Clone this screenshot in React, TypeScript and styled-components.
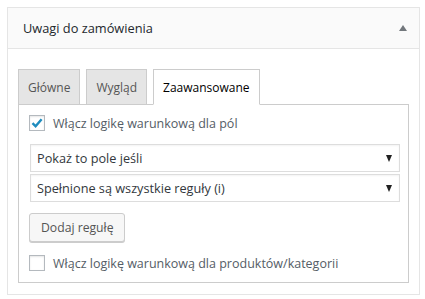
import React, { useState } from "react";
import styled, { createGlobalStyle } from "styled-components";

const GlobalStyle = createGlobalStyle`
	body {
		margin: 0;
		background: #ffffff;
		font-family: "Open Sans", "Noto Sans", sans-serif;
	}
`;

const Panel = styled.div`
	margin: 7px 5px 0 7px;
	width: 411px;
	border: 1px solid #e5e5e5;
	background: #fff;
`;

const Header = styled.div`
	display: flex;
	align-items: center;
	justify-content: space-between;
	height: 40px;
	padding: 0 12px 0 15px;
	background: #fafafa;
	border-bottom: 1px solid #e5e5e5;
`;

const Title = styled.span`
	font-size: 12.8px;
	color: #23282d;
`;

const Toggle = styled.span`
	width: 0;
	height: 0;
	border-left: 4px solid transparent;
	border-right: 4px solid transparent;
	border-bottom: 6px solid #72777c;
`;

const Body = styled.div`
	padding: 20px 10px 11px 10px;
`;

const Tabs = styled.div`
	display: flex;
	gap: 6px;
	margin-bottom: -1px;
`;

const Tab = styled.button<{ $active?: boolean }>`
	height: 36px;
	padding: 0 9px;
	border: 1px solid #ccc;
	border-bottom-color: ${(p) => (p.$active ? "#fff" : "#ccc")};
	background: ${(p) => (p.$active ? "#fff" : "#e5e5e5")};
	color: ${(p) => (p.$active ? "#000" : "#555")};
	font-family: "Open Sans", sans-serif;
	font-size: 12px;
	position: relative;
	z-index: 1;
	cursor: pointer;
`;

const Content = styled.div`
	border: 1px solid #ccc;
	padding: 9px 9px 10px 10px;
	display: flex;
	flex-direction: column;
`;

const CheckRow = styled.label`
	display: flex;
	align-items: center;
	gap: 8px;
	font-size: 12.5px;
	color: #555d66;
	height: 18px;
	cursor: pointer;
`;

const Box = styled.span`
	width: 14px;
	height: 14px;
	border: 1px solid #b4b9be;
	box-shadow: inset 0 1px 2px rgba(0, 0, 0, 0.1);
	display: flex;
	align-items: center;
	justify-content: center;
	background: #fff;
`;

const Selects = styled.div`
	display: flex;
	flex-direction: column;
	gap: 2px;
	margin: 12px 0 0 1px;
	width: 370px;
`;

const Select = styled.div`
	height: 26px;
	border: 1px solid #ddd;
	display: flex;
	align-items: center;
	justify-content: space-between;
	padding: 0 7px 0 6px;
	font-size: 12.7px;
	color: #32373c;
	box-shadow: inset 0 1px 2px rgba(0, 0, 0, 0.05);
`;

const Arrow = styled.span`
	width: 0;
	height: 0;
	border-left: 3.5px solid transparent;
	border-right: 3.5px solid transparent;
	border-top: 7px solid #222;
`;

const Button = styled.button`
	align-self: flex-start;
	margin-top: 11px;
	height: 29px;
	padding: 0 11px;
	border: 1px solid #ccc;
	border-radius: 3px;
	background: #f7f7f7;
	box-shadow: 0 1px 0 #ccc;
	color: #555;
	font-family: "Open Sans", sans-serif;
	font-size: 12.2px;
	cursor: pointer;
`;

const LastRow = styled.div`
	margin-top: 12px;
`;

const Check = ({ on }: { on: boolean }) => (
	<Box>
		{on && (
			<svg width="14" height="14" viewBox="0 0 14 14">
				<path d="M2.5 7.2 L5.6 10.3 L11.6 3.2" fill="none" stroke="#1e8cbe" strokeWidth="2.4" />
			</svg>
		)}
	</Box>
);

const App = () => {
	const [tab, setTab] = useState(2);
	const [fields, setFields] = useState(true);
	const [products, setProducts] = useState(false);
	const tabs = ["Główne", "Wygląd", "Zaawansowane"];

	return (
		<>
			<GlobalStyle />
			<Panel>
				<Header>
					<Title>Uwagi do zamówienia</Title>
					<Toggle />
				</Header>
				<Body>
					<Tabs>
						{tabs.map((t, i) => (
							<Tab key={t} $active={i === tab} onClick={() => setTab(i)}>
								{t}
							</Tab>
						))}
					</Tabs>
					<Content>
						<CheckRow onClick={() => setFields(!fields)}>
							<Check on={fields} />
							Włącz logikę warunkową dla pól
						</CheckRow>
						<Selects>
							<Select>
								Pokaż to pole jeśli
								<Arrow />
							</Select>
							<Select>
								Spełnione są wszystkie reguły (i)
								<Arrow />
							</Select>
						</Selects>
						<Button>Dodaj regułę</Button>
						<LastRow>
							<CheckRow onClick={() => setProducts(!products)}>
								<Check on={products} />
								Włącz logikę warunkową dla produktów/kategorii
							</CheckRow>
						</LastRow>
					</Content>
				</Body>
			</Panel>
		</>
	);
};

export default App;
